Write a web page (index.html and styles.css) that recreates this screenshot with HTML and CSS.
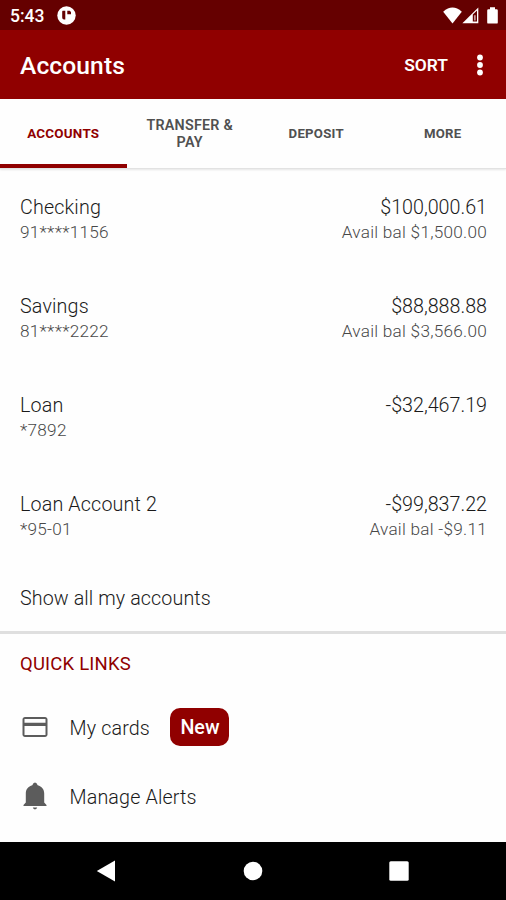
FILE: index.html
```
<!DOCTYPE html>
<html lang="en">
<head>
  <meta charset="UTF-8">
  <title>Accounts</title>
  <link rel="stylesheet" href="styles.css">
</head>
<body>
<div class="phone">
  <div class="status">
    <span class="time">5:43</span>
    <svg class="app-icon" width="19" height="19" viewBox="0 0 19 19">
      <circle cx="9.5" cy="9.5" r="9.2" fill="#fff"/>
      <path d="M5.600 4.800h2.700v8.800H7q-1.800-.4-1.800-2.200V5.600zM10.300 4.800h2.400l1.300 1.200v2.300h-3.700z" fill="#650000"/>
    </svg>
    <div class="signals">
      <svg width="19" height="17" viewBox="0 0 19 17"><path d="M.2 4.700Q9.500-3.600 18.800 4.700L9.500 16.600z" fill="#fff"/></svg>
      <svg width="17" height="17" viewBox="0 0 17 17"><path d="M16.300.4V16.300H.4z" fill="#fff"/><path d="M10.800 7.600l4.200-4.200v11.200h-4.200z" fill="#650000"/><path d="M12.300 8.200h1.200v5.400h-1.200z" fill="#e8d5d5"/></svg>
      <svg class="battery" width="11" height="17" viewBox="0 0 11 17"><path d="M3 .3h5v1.900h1.600q1.200 0 1.200 1.200v12q0 1.200-1.200 1.200H1.400q-1.200 0-1.200-1.200v-12q0-1.200 1.200-1.200H3z" fill="#fff"/></svg>
    </div>
  </div>
  <div class="header">
    <h1>Accounts</h1>
    <span class="sort">SORT</span>
    <svg width="8" height="22" viewBox="0 0 8 22" fill="#fff"><circle cx="4" cy="3.500" r="2.900"/><circle cx="4" cy="11" r="2.900"/><circle cx="4" cy="18.500" r="2.900"/></svg>
  </div>
  <ul class="tabs">
    <li class="current">ACCOUNTS</li>
    <li>TRANSFER &amp;<br>PAY</li>
    <li>DEPOSIT</li>
    <li>MORE</li>
  </ul>
  <ul class="accounts">
    <li>
      <div><p class="name">Checking</p><p class="sub">91****1156</p></div>
      <div class="right"><p class="name">$100,000.61</p><p class="sub">Avail bal $1,500.00</p></div>
    </li>
    <li>
      <div><p class="name">Savings</p><p class="sub">81****2222</p></div>
      <div class="right"><p class="name">$88,888.88</p><p class="sub">Avail bal $3,566.00</p></div>
    </li>
    <li>
      <div><p class="name">Loan</p><p class="sub">*7892</p></div>
      <div class="right"><p class="name">-$32,467.19</p></div>
    </li>
    <li>
      <div><p class="name">Loan Account 2</p><p class="sub">*95-01</p></div>
      <div class="right"><p class="name">-$99,837.22</p><p class="sub">Avail bal -$9.11</p></div>
    </li>
  </ul>
  <div class="show-all">Show all my accounts</div>
  <div class="links">
    <h2>QUICK LINKS</h2>
    <div class="link">
      <svg width="30" height="30" viewBox="0 0 24 24"><path d="M20 4H4c-1.110 0-1.990.89-1.990 2L2 18c0 1.110.89 2 2 2h16c1.110 0 2-.89 2-2V6c0-1.110-.89-2-2-2zm.4 14.400H3.600v-7.200h16.800v7.200zm0-9.800H3.600V5.600h16.800v3z" fill="#5c5c5c"/></svg>
      <span>My cards</span>
      <b class="badge">New</b>
    </div>
    <div class="link">
      <svg class="bell" width="24" height="28" viewBox="0 0 24 28"><path d="M.5 24v-1.100l2.300-2.300v-9c0-4.200 2.500-7.300 6.500-8.300Q10.200.4 12 .4t2.700 2.900c4 1 6.500 4.100 6.500 8.300v9l2.300 2.300V24zM9.800 25.600h4.400q-.3 1.800-2.200 1.800t-2.200-1.800z" fill="#5c5c5c"/></svg>
      <span>Manage Alerts</span>
    </div>
  </div>
  <div class="nav">
    <svg width="20" height="22" viewBox="0 0 20 22"><path d="M.8 11L19 .5v21z" fill="#fff"/></svg>
    <svg width="20" height="22" viewBox="0 0 20 22"><circle cx="10" cy="11" r="9.300" fill="#fff"/></svg>
    <svg width="20" height="22" viewBox="0 0 20 22"><rect x=".3" y="1.300" width="19.400" height="19.400" rx="1.500" fill="#fff"/></svg>
  </div>
</div>
</body>
</html>
```
FILE: styles.css
```
* {
  padding: 0;
  margin: 0;
  list-style: none;
  box-sizing: border-box;
}

body {
  font-family: Roboto, sans-serif;
  background: #fefefe;
  color: #1a1a1a;
}

svg {
  display: block;
  flex: none;
}

.phone {
  width: 506px;
  height: 900px;
  overflow: hidden;
  display: flex;
  flex-direction: column;
}

.status {
  height: 30px;
  background: #650000;
  color: #fff;
  display: flex;
  align-items: center;
  padding: 1px 8px 0 10px;
}

.time {
  font-size: 17.5px;
  font-weight: 500;
  width: 47px;
}

.signals {
  display: flex;
  margin-left: auto;
}

.signals .battery {
  margin-left: 8px;
}

.header {
  height: 68.5px;
  background: #900000;
  color: #fff;
  display: flex;
  align-items: center;
  padding: 2px 22px 0 20px;
}

.header h1 {
  font-size: 24.6px;
  font-weight: 500;
  letter-spacing: .1px;
  flex: 1;
}

.sort {
  font-size: 17.4px;
  font-weight: 600;
  margin-right: 28px;
}

.tabs {
  height: 70px;
  display: flex;
  border-bottom: 1px solid #e2e2e2;
  box-shadow: 0 1px 2px rgba(0, 0, 0, .1);
}

.tabs li {
  flex: 1;
  display: flex;
  align-items: center;
  justify-content: center;
  text-align: center;
  font-size: 13.2px;
  font-weight: 700;
  letter-spacing: .25px;
  line-height: 17px;
  padding-top: 1px;
  color: #505050;
}

.tabs li:nth-child(2) {
  font-size: 14.3px;
  font-weight: 600;
  padding-top: 2px;
}

.tabs .current {
  color: #900000;
  font-size: 13.4px;
  border-bottom: 4px solid #900000;
  padding-top: 5px;
}

.accounts li {
  height: 99px;
  padding: 26px 19px 0 20px;
  display: flex;
  justify-content: space-between;
}

.name {
  font-size: 19.7px;
  font-weight: 300;
  letter-spacing: .15px;
  line-height: 26px;
}

.right .name {
  letter-spacing: 0;
}

.sub {
  font-size: 17.2px;
  font-weight: 300;
  letter-spacing: .25px;
  line-height: 22px;
  color: #484848;
}

.right {
  text-align: right;
}

.show-all {
  height: 69px;
  padding: 21px 20px 0;
  font-size: 19.7px;
  font-weight: 300;
  letter-spacing: .1px;
  line-height: 26px;
  border-bottom: 3px solid #dfdfdf;
}

.links {
  height: 208.5px;
  padding: 18px 20px 0;
}

.links h2 {
  font-size: 18.5px;
  font-weight: 400;
  letter-spacing: .2px;
  line-height: 24px;
  color: #900000;
  margin-bottom: 17px;
}

.link {
  height: 69px;
  display: flex;
  align-items: center;
  font-size: 19.7px;
  font-weight: 300;
}

.link span {
  margin-left: 19.5px;
  padding-top: 2px;
  letter-spacing: .15px;
}

.link .bell {
  margin: 0 3px;
}

.badge {
  width: 59px;
  height: 38px;
  margin-left: 20.5px;
  border-radius: 10px;
  background: #900000;
  color: #fff;
  font-weight: 500;
  line-height: 39px;
  text-align: center;
}

.nav {
  height: 58px;
  background: #000;
  display: flex;
  align-items: center;
  justify-content: space-between;
  padding: 0 97px 0 96px;
}
```
